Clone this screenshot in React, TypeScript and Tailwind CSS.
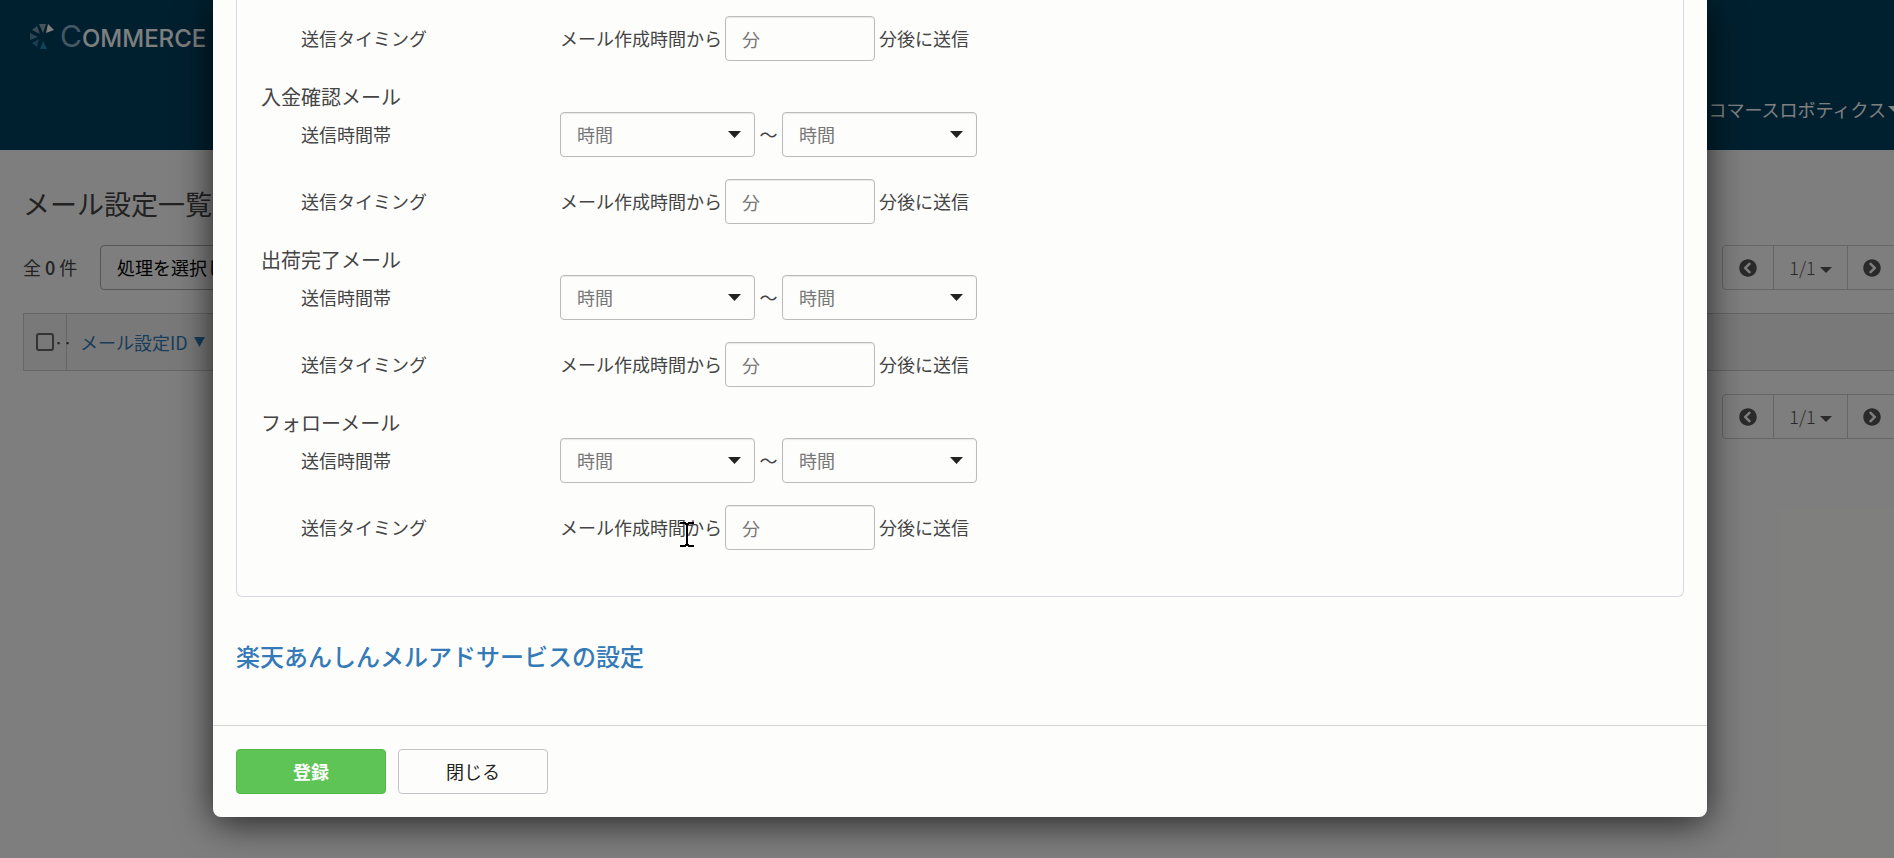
import { FaChevronCircleLeft, FaChevronCircleRight } from "react-icons/fa";

const mailSections = [
  { id: "payment", title: "入金確認メール" },
  { id: "shipping", title: "出荷完了メール" },
  { id: "follow", title: "フォローメール" },
];

function Caret({ className }: { className?: string }) {
  return (
    <svg
      viewBox="0 0 14 8"
      preserveAspectRatio="none"
      className={className}
      fill="currentColor"
      aria-hidden="true"
    >
      <path d="M0 0h14L7 8z" />
    </svg>
  );
}

function LogoMark() {
  return (
    <svg viewBox="0 0 26 28" className="w-[26px] h-[28px]" aria-hidden="true">
      <path d="M16 11 18 2l6 6z" fill="#fff" />
      <path d="M9 2h7l-3 9z" fill="#8ea6b4" />
      <path d="M2 8l5-4 3 8z" fill="#7b98a8" />
      <path d="M0 11l8 4-8 3z" fill="#5a88a2" />
      <path d="M2 21l7-4-2 8z" fill="#2b7da8" />
      <path d="M10 27l3-8 4 8z" fill="#1f86b8" />
    </svg>
  );
}

function Pagination() {
  return (
    <nav
      aria-label="ページ"
      className="flex h-[45px] rounded border border-[#ccc] text-[#555]"
    >
      <button aria-label="前へ" className="w-[50px] flex items-center justify-center">
        <FaChevronCircleLeft size={18} />
      </button>
      <button className="w-[75px] flex items-center justify-center gap-1 border-x border-[#ccc] text-[18px] font-light">
        1/1
        <Caret className="w-[12px] h-[6px] mt-1" />
      </button>
      <button aria-label="次へ" className="w-[48px] flex items-center justify-center">
        <FaChevronCircleRight size={18} />
      </button>
    </nav>
  );
}

function HourSelect({ id, label }: { id: string; label: string }) {
  return (
    <div className="relative">
      <select
        id={id}
        aria-label={label}
        className="block w-[195px] h-[45px] px-4 appearance-none rounded border border-[#bbb] bg-transparent text-[18px] text-[#777] shadow-[inset_0_1px_1px_rgba(0,0,0,0.08)]"
      >
        <option>時間</option>
      </select>
      <Caret className="absolute right-[14px] top-[19px] w-[13px] h-[7px] text-[#222] pointer-events-none" />
    </div>
  );
}

function TimingRow({ id }: { id: string }) {
  return (
    <div className="flex items-center h-[45px] pl-10">
      <label htmlFor={`${id}-minutes`} className="w-[259px]">
        送信タイミング
      </label>
      <span>メール作成時間から</span>
      <input
        id={`${id}-minutes`}
        type="text"
        placeholder="分"
        className="w-[150px] h-[45px] ml-[3px] mr-1 px-4 rounded border border-[#bbb] bg-transparent placeholder:text-[#777] shadow-[inset_0_1px_1px_rgba(0,0,0,0.08)]"
      />
      <span>分後に送信</span>
    </div>
  );
}

function MailSection({ id, title }: { id: string; title: string }) {
  return (
    <section>
      <h4 className="h-[51px] pt-[21px] text-[20px] leading-[30px]">{title}</h4>
      <div className="flex items-center h-[45px] pl-10">
        <label htmlFor={`${id}-from`} className="w-[259px]">
          送信時間帯
        </label>
        <HourSelect id={`${id}-from`} label="開始時間" />
        <span className="w-[27px] text-center">～</span>
        <HourSelect id={`${id}-to`} label="終了時間" />
      </div>
      <div className="pt-[22px]">
        <TimingRow id={id} />
      </div>
    </section>
  );
}

// The list behind the dialog runs a little past the right edge of the window.
function MailListPage() {
  return (
    <div className="-mr-[26px]">
      <header className="h-[150px] bg-[#00405f] text-white">
        <div className="flex items-center h-[72px] pl-[30px] gap-1 font-[Inter]">
          <LogoMark />
          <span className="text-[24px] leading-none font-medium">
            <span className="text-[30px] font-normal text-[#86b0c8]">C</span>OMMERCE
          </span>
        </div>
        <div className="flex justify-end pr-[18px]">
          <button className="flex items-center gap-[2px] h-[75px] text-[18px]">
            コマースロボティクス
            <Caret className="w-[14px] h-[7px]" />
          </button>
        </div>
      </header>

      <main className="pl-[23px] pr-[23px]">
        <h1 className="h-[95px] pt-[34px] text-[27px] leading-[40px]">メール設定一覧</h1>
        <div className="flex items-center h-[45px]">
          <p className="w-[77px]">
            全 <b className="font-medium">0</b> 件
          </p>
          <button className="h-[45px] px-4 rounded border border-[#aaa] text-black">
            処理を選択して
          </button>
          <div className="ml-auto">
            <Pagination />
          </div>
        </div>
        <table className="w-full mt-[23px] mb-[23px] table-fixed border border-[#ccc] bg-[#f2f2f2]">
          <thead>
            <tr className="h-[57px]">
              <th className="w-[43px] border-r border-[#ccc] font-normal">
                <div className="flex items-center pl-3">
                  <input
                    type="checkbox"
                    aria-label="すべて選択"
                    className="w-[18px] h-[18px] shrink-0 appearance-none rounded-[3px] border-2 border-[#666]"
                  />
                  <span>‥</span>
                </div>
              </th>
              <th className="pl-[13px] text-left font-normal">
                <a href="#" className="flex items-center gap-[6px] text-[#337ab7]">
                  メール設定ID
                  <Caret className="w-[11px] h-[10px]" />
                </a>
              </th>
            </tr>
          </thead>
        </table>
        <div className="flex justify-end">
          <Pagination />
        </div>
      </main>
    </div>
  );
}

function TextCursor() {
  return (
    <svg
      viewBox="0 0 14 26"
      className="absolute left-[680px] top-[522px] w-[14px] h-[26px] pointer-events-none"
      fill="none"
      stroke="#000"
      strokeWidth="2"
      aria-hidden="true"
    >
      <path d="M0 1h6M8 1h6M5 2h4M7 2v22M5 23h4M0 24h6M8 24h6" />
    </svg>
  );
}

export default function App() {
  return (
    <div className="relative h-screen overflow-hidden bg-[#fdfdfc] text-[18px] leading-[27px] text-[#444] font-['Noto_Sans_CJK_JP',sans-serif]">
      <MailListPage />

      <div className="absolute inset-0 overflow-hidden bg-black/50 pl-[213px] pr-[187px]">
        <div
          role="dialog"
          aria-label="メール設定"
          className="rounded-b-lg bg-[#fdfdfc] shadow-[0_6px_36px_rgba(0,0,0,0.7)]"
        >
          <div className="px-[23px] pb-[51px]">
            <div className="rounded-b-md border border-t-0 border-[#d8d8e2] pl-6 pt-4 pb-[46px]">
              <TimingRow id="order" />
              {mailSections.map((section) => (
                <MailSection key={section.id} id={section.id} title={section.title} />
              ))}
            </div>
            <h3 className="pt-[41px] text-[24px] leading-[36px] font-medium">
              <a href="#" className="text-[#337ab7]">
                楽天あんしんメルアドサービスの設定
              </a>
            </h3>
          </div>
          <div className="flex gap-3 border-t border-[#d4d4d0] px-[23px] pt-[23px] pb-[23px]">
            <button className="w-[150px] h-[45px] rounded border border-[#54b848] bg-[#5ec455] font-bold text-white">
              登録
            </button>
            <button className="w-[150px] h-[45px] rounded border border-[#c4c4c8] text-[#222]">
              閉じる
            </button>
          </div>
        </div>
      </div>

      <TextCursor />
    </div>
  );
}
